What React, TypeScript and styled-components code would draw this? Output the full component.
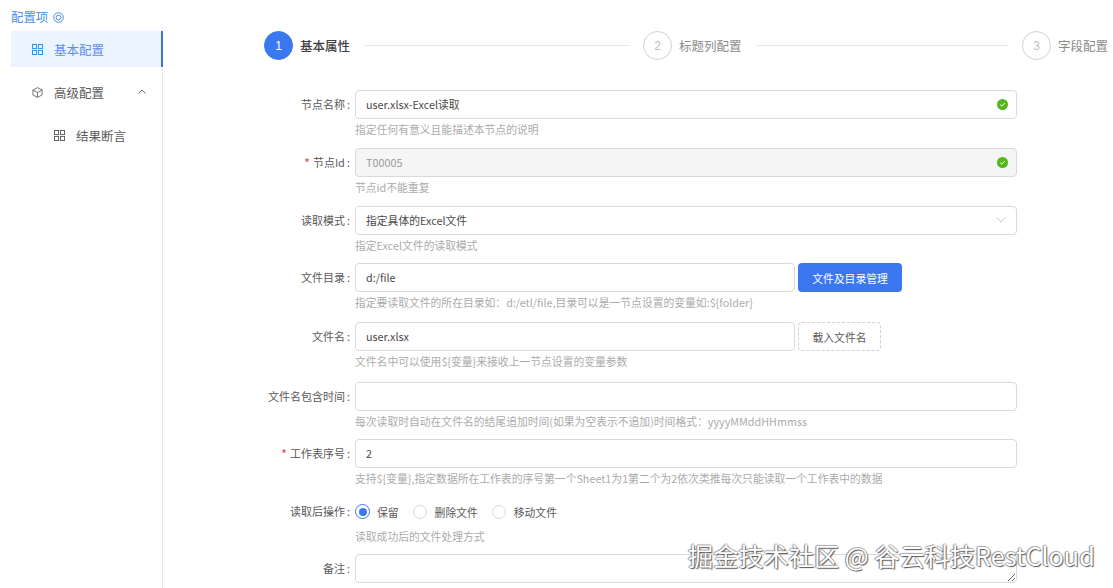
import React from 'react';
import styled, { createGlobalStyle } from 'styled-components';

const GlobalStyle = createGlobalStyle`
  html, body {
    margin: 0;
    padding: 0;
    background: #fff;
    overflow: hidden;
  }
  body {
    font-family: "Noto Sans CJK SC", "Noto Sans", sans-serif;
    font-size: 11px;
    color: #595959;
  }
`;

const Page = styled.div`
  display: flex;
  position: relative;
  width: 1113px;
  height: 588px;
  overflow: hidden;
`;

const Side = styled.aside`
  width: 152px;
  margin-left: 11px;
  flex: none;
  display: flex;
  flex-direction: column;
`;

const SideTitle = styled.div`
  height: 31px;
  padding-top: 3px;
  box-sizing: border-box;
  display: flex;
  align-items: center;
  gap: 5px;
  color: #4a90e2;
  font-size: 12.4px;
  line-height: 16px;
`;

const Menu = styled.ul`
  flex: 1;
  list-style: none;
  margin: 0;
  padding: 0;
  border-right: 1px solid #e8e8e8;
`;

const MenuItem = styled.li<{ $active?: boolean; $indent?: number }>`
  position: relative;
  display: flex;
  align-items: center;
  height: 36px;
  margin-right: -1px;
  margin-bottom: 7px;
  padding-left: ${(p) => p.$indent ?? 21}px;
  gap: 11px;
  font-size: 12.5px;
  color: ${(p) => (p.$active ? '#5f8fe8' : '#595959')};
  background: ${(p) => (p.$active ? '#ebf4ff' : 'transparent')};
  border-right: ${(p) => (p.$active ? '2px solid #3f74d0' : 'none')};
  box-sizing: border-box;
`;

const Caret = styled.span`
  position: absolute;
  right: 16px;
  top: 14px;
  display: flex;
`;

const Main = styled.main`
  flex: 1;
  padding-top: 31px;
`;

const Steps = styled.div`
  display: flex;
  align-items: center;
  margin: 0 5px 0 101px;
  height: 29px;
`;

const Step = styled.div<{ $last?: boolean }>`
  display: flex;
  align-items: center;
  flex: ${(p) => (p.$last ? 'none' : '1')};
`;

const StepDot = styled.div<{ $active?: boolean }>`
  width: 29px;
  height: 29px;
  border-radius: 50%;
  flex: none;
  box-sizing: border-box;
  display: flex;
  align-items: center;
  justify-content: center;
  font-family: "Liberation Sans", sans-serif;
  font-size: 12px;
  color: ${(p) => (p.$active ? '#fff' : '#bfbfbf')};
  background: ${(p) => (p.$active ? '#3b78f0' : '#fff')};
  border: 1px solid ${(p) => (p.$active ? '#3b78f0' : '#d0d0d0')};
`;

const StepName = styled.div<{ $active?: boolean }>`
  margin-left: 7px;
  font-size: 12.5px;
  white-space: nowrap;
  color: ${(p) => (p.$active ? '#404040' : '#8c8c8c')};
  font-weight: ${(p) => (p.$active ? 500 : 400)};
`;

const StepLine = styled.div`
  flex: 1;
  height: 1px;
  background: #e8e8e8;
  margin: 0 13px 0 14px;
`;

const Form = styled.div`
  margin-top: 30px;
  display: flex;
  flex-direction: column;
`;

const Row = styled.div<{ $height?: number }>`
  display: flex;
  height: ${(p) => p.$height ?? 58}px;
`;

const Label = styled.label<{ $required?: boolean }>`
  width: 192px;
  flex: none;
  box-sizing: border-box;
  padding: 0 5px 1px 0;
  height: 29px;
  display: flex;
  align-items: center;
  justify-content: flex-end;
  font-size: 11px;
  color: #595959;
  white-space: nowrap;
  ${(p) =>
    p.$required &&
    `&::before {
      content: '*';
      color: #e8404a;
      margin-right: 3px;
      font-size: 12px;
    }`}
  &::after {
    content: ':';
    margin-left: 2px;
  }
`;

const Field = styled.div`
  flex: none;
  width: 662px;
`;

const InputLine = styled.div`
  display: flex;
  gap: 3px;
`;

const InputBox = styled.div<{ $short?: boolean }>`
  position: relative;
  width: ${(p) => (p.$short ? '440px' : '100%')};
  flex: none;
`;

const TextInput = styled.input<{ $disabled?: boolean }>`
  width: 100%;
  height: 29px;
  box-sizing: border-box;
  padding: 0 10px 1px;
  border: 1px solid #d9d9d9;
  border-radius: 4px;
  outline: none;
  font-family: inherit;
  font-size: 10.8px;
  color: ${(p) => (p.$disabled ? '#9a9a9a' : '#4a4a4a')};
  background: ${(p) => (p.$disabled ? '#f5f5f5' : '#fff')};
`;

const CheckMark = styled.span`
  position: absolute;
  right: 9px;
  top: 9px;
  width: 11px;
  height: 11px;
  display: flex;
`;

const SelectChevron = styled.span`
  position: absolute;
  right: 11px;
  top: 10px;
  display: flex;
`;

const Help = styled.div`
  margin-top: 1px;
  height: 18px;
  line-height: 18px;
  font-size: 10.8px;
  color: #ababab;
  white-space: nowrap;
`;

const PrimaryButton = styled.button`
  width: 104px;
  height: 29px;
  border: none;
  border-radius: 4px;
  background: #3b78f0;
  color: #fff;
  font-family: inherit;
  font-size: 10.8px;
  padding: 0;
`;

const DashedButton = styled.button`
  width: 83px;
  height: 29px;
  border: 1px dashed #d0d0d0;
  border-radius: 4px;
  background: #fff;
  color: #595959;
  font-family: inherit;
  font-size: 10.8px;
  padding: 0;
`;

const RadioGroup = styled.div`
  display: flex;
  align-items: center;
  height: 29px;
  gap: 14px;
`;

const RadioItem = styled.span`
  display: flex;
  align-items: center;
  gap: 8px;
  font-size: 10.8px;
  color: #595959;
`;

const RadioDot = styled.span<{ $checked?: boolean }>`
  width: ${(p) => (p.$checked ? 15 : 14)}px;
  height: ${(p) => (p.$checked ? 15 : 14)}px;
  margin-right: ${(p) => (p.$checked ? -1 : 0)}px;
  border-radius: 50%;
  box-sizing: border-box;
  background: #fff;
  border: 1px solid ${(p) => (p.$checked ? '#3b78f0' : '#d9d9d9')};
  display: flex;
  align-items: center;
  justify-content: center;
  ${(p) =>
    p.$checked &&
    `&::after {
      content: '';
      width: 8px;
      height: 8px;
      border-radius: 50%;
      background: #3b78f0;
    }`}
`;

const TextArea = styled.textarea`
  display: block;
  width: 100%;
  height: 29px;
  box-sizing: border-box;
  border: 1px solid #d9d9d9;
  border-radius: 4px;
  outline: none;
  margin: 0;
`;

const Watermark = styled.div`
  position: absolute;
  left: 688px;
  top: 538px;
  font-size: 25.2px;
  line-height: 34px;
  white-space: nowrap;
  color: #fff;
  text-shadow: 1px 1px 1px #555, -1px 0 1px #888, 0 -1px 1px #aaa;
`;

const GridIcon = ({ color }: { color: string }) => (
  <svg width="11" height="11" viewBox="0 0 12 12" fill="none" stroke={color} strokeWidth="1">
    <rect x="0.5" y="0.5" width="4.5" height="4.5" />
    <rect x="7" y="0.5" width="4.5" height="4.5" />
    <rect x="0.5" y="7" width="4.5" height="4.5" />
    <rect x="7" y="7" width="4.5" height="4.5" />
  </svg>
);

const CubeIcon = () => (
  <svg width="11" height="11" viewBox="0 0 12 12" fill="none" stroke="#595959" strokeWidth="0.9">
    <path d="M6 0.7 L11 3.3 V8.7 L6 11.3 L1 8.7 V3.3 Z" />
    <path d="M1 3.3 L6 6 L11 3.3 M6 6 V11.3" />
  </svg>
);

const TargetIcon = () => (
  <svg width="11" height="11" viewBox="0 0 11 11" fill="none" stroke="#4a90e2" strokeWidth="1">
    <circle cx="5.5" cy="5.5" r="4.8" />
    <circle cx="5.5" cy="5.5" r="2.4" />
  </svg>
);

const OkIcon = () => (
  <svg width="11" height="11" viewBox="0 0 11 11">
    <circle cx="5.5" cy="5.5" r="5.5" fill="#52b81c" />
    <path d="M3.2 5.6 L4.9 7.2 L7.8 4" fill="none" stroke="#fff" strokeWidth="1" />
  </svg>
);

const Chevron = ({ up }: { up?: boolean }) => (
  <svg width="10" height="8" viewBox="0 0 10 8" fill="none" stroke={up ? '#595959' : '#bfbfbf'} strokeWidth="0.9">
    <path d={up ? 'M1.5 5.5 L5 2 L8.5 5.5' : 'M1 1.5 L5 6 L9 1.5'} />
  </svg>
);

export default function App() {
  return (
    <Page>
      <GlobalStyle />
      <Side>
        <SideTitle>
          配置项 <TargetIcon />
        </SideTitle>
        <Menu>
          <MenuItem $active>
            <GridIcon color="#1d8fe8" />
            基本配置
          </MenuItem>
          <MenuItem>
            <CubeIcon />
            高级配置
            <Caret>
              <Chevron up />
            </Caret>
          </MenuItem>
          <MenuItem $indent={43}>
            <GridIcon color="#595959" />
            结果断言
          </MenuItem>
        </Menu>
      </Side>
      <Main>
        <Steps>
          <Step>
            <StepDot $active>1</StepDot>
            <StepName $active>基本属性</StepName>
            <StepLine />
          </Step>
          <Step>
            <StepDot>2</StepDot>
            <StepName>标题列配置</StepName>
            <StepLine />
          </Step>
          <Step $last>
            <StepDot>3</StepDot>
            <StepName>字段配置</StepName>
          </Step>
        </Steps>
        <Form>
          <Row>
            <Label>节点名称</Label>
            <Field>
              <InputBox>
                <TextInput readOnly value="user.xlsx-Excel读取" />
                <CheckMark>
                  <OkIcon />
                </CheckMark>
              </InputBox>
              <Help>指定任何有意义且能描述本节点的说明</Help>
            </Field>
          </Row>
          <Row>
            <Label $required>节点Id</Label>
            <Field>
              <InputBox>
                <TextInput readOnly $disabled value="T00005" />
                <CheckMark>
                  <OkIcon />
                </CheckMark>
              </InputBox>
              <Help>节点id不能重复</Help>
            </Field>
          </Row>
          <Row $height={57}>
            <Label>读取模式</Label>
            <Field>
              <InputBox>
                <TextInput readOnly value="指定具体的Excel文件" />
                <SelectChevron>
                  <Chevron />
                </SelectChevron>
              </InputBox>
              <Help>指定Excel文件的读取模式</Help>
            </Field>
          </Row>
          <Row $height={59}>
            <Label>文件目录</Label>
            <Field>
              <InputLine>
                <InputBox $short>
                  <TextInput readOnly value="d:/file" />
                </InputBox>
                <PrimaryButton>文件及目录管理</PrimaryButton>
              </InputLine>
              <Help>指定要读取文件的所在目录如：d:/etl/file,目录可以是一节点设置的变量如:{'${folder}'}</Help>
            </Field>
          </Row>
          <Row $height={60}>
            <Label>文件名</Label>
            <Field>
              <InputLine>
                <InputBox $short>
                  <TextInput readOnly value="user.xlsx" />
                </InputBox>
                <DashedButton>载入文件名</DashedButton>
              </InputLine>
              <Help>文件名中可以使用{'${变量}'}来接收上一节点设置的变量参数</Help>
            </Field>
          </Row>
          <Row $height={57}>
            <Label>文件名包含时间</Label>
            <Field>
              <InputBox>
                <TextInput readOnly value="" />
              </InputBox>
              <Help>每次读取时自动在文件名的结尾追加时间(如果为空表示不追加)时间格式：yyyyMMddHHmmss</Help>
            </Field>
          </Row>
          <Row>
            <Label $required>工作表序号</Label>
            <Field>
              <InputBox>
                <TextInput readOnly value="2" />
              </InputBox>
              <Help>支持{'${变量}'},指定数据所在工作表的序号第一个Sheet1为1第二个为2依次类推每次只能读取一个工作表中的数据</Help>
            </Field>
          </Row>
          <Row $height={57}>
            <Label>读取后操作</Label>
            <Field>
              <RadioGroup>
                <RadioItem>
                  <RadioDot $checked />
                  保留
                </RadioItem>
                <RadioItem>
                  <RadioDot />
                  删除文件
                </RadioItem>
                <RadioItem>
                  <RadioDot />
                  移动文件
                </RadioItem>
              </RadioGroup>
              <Help>读取成功后的文件处理方式</Help>
            </Field>
          </Row>
          <Row>
            <Label>备注</Label>
            <Field>
              <TextArea readOnly />
            </Field>
          </Row>
        </Form>
      </Main>
      <Watermark>掘金技术社区 @ 谷云科技RestCloud</Watermark>
    </Page>
  );
}
